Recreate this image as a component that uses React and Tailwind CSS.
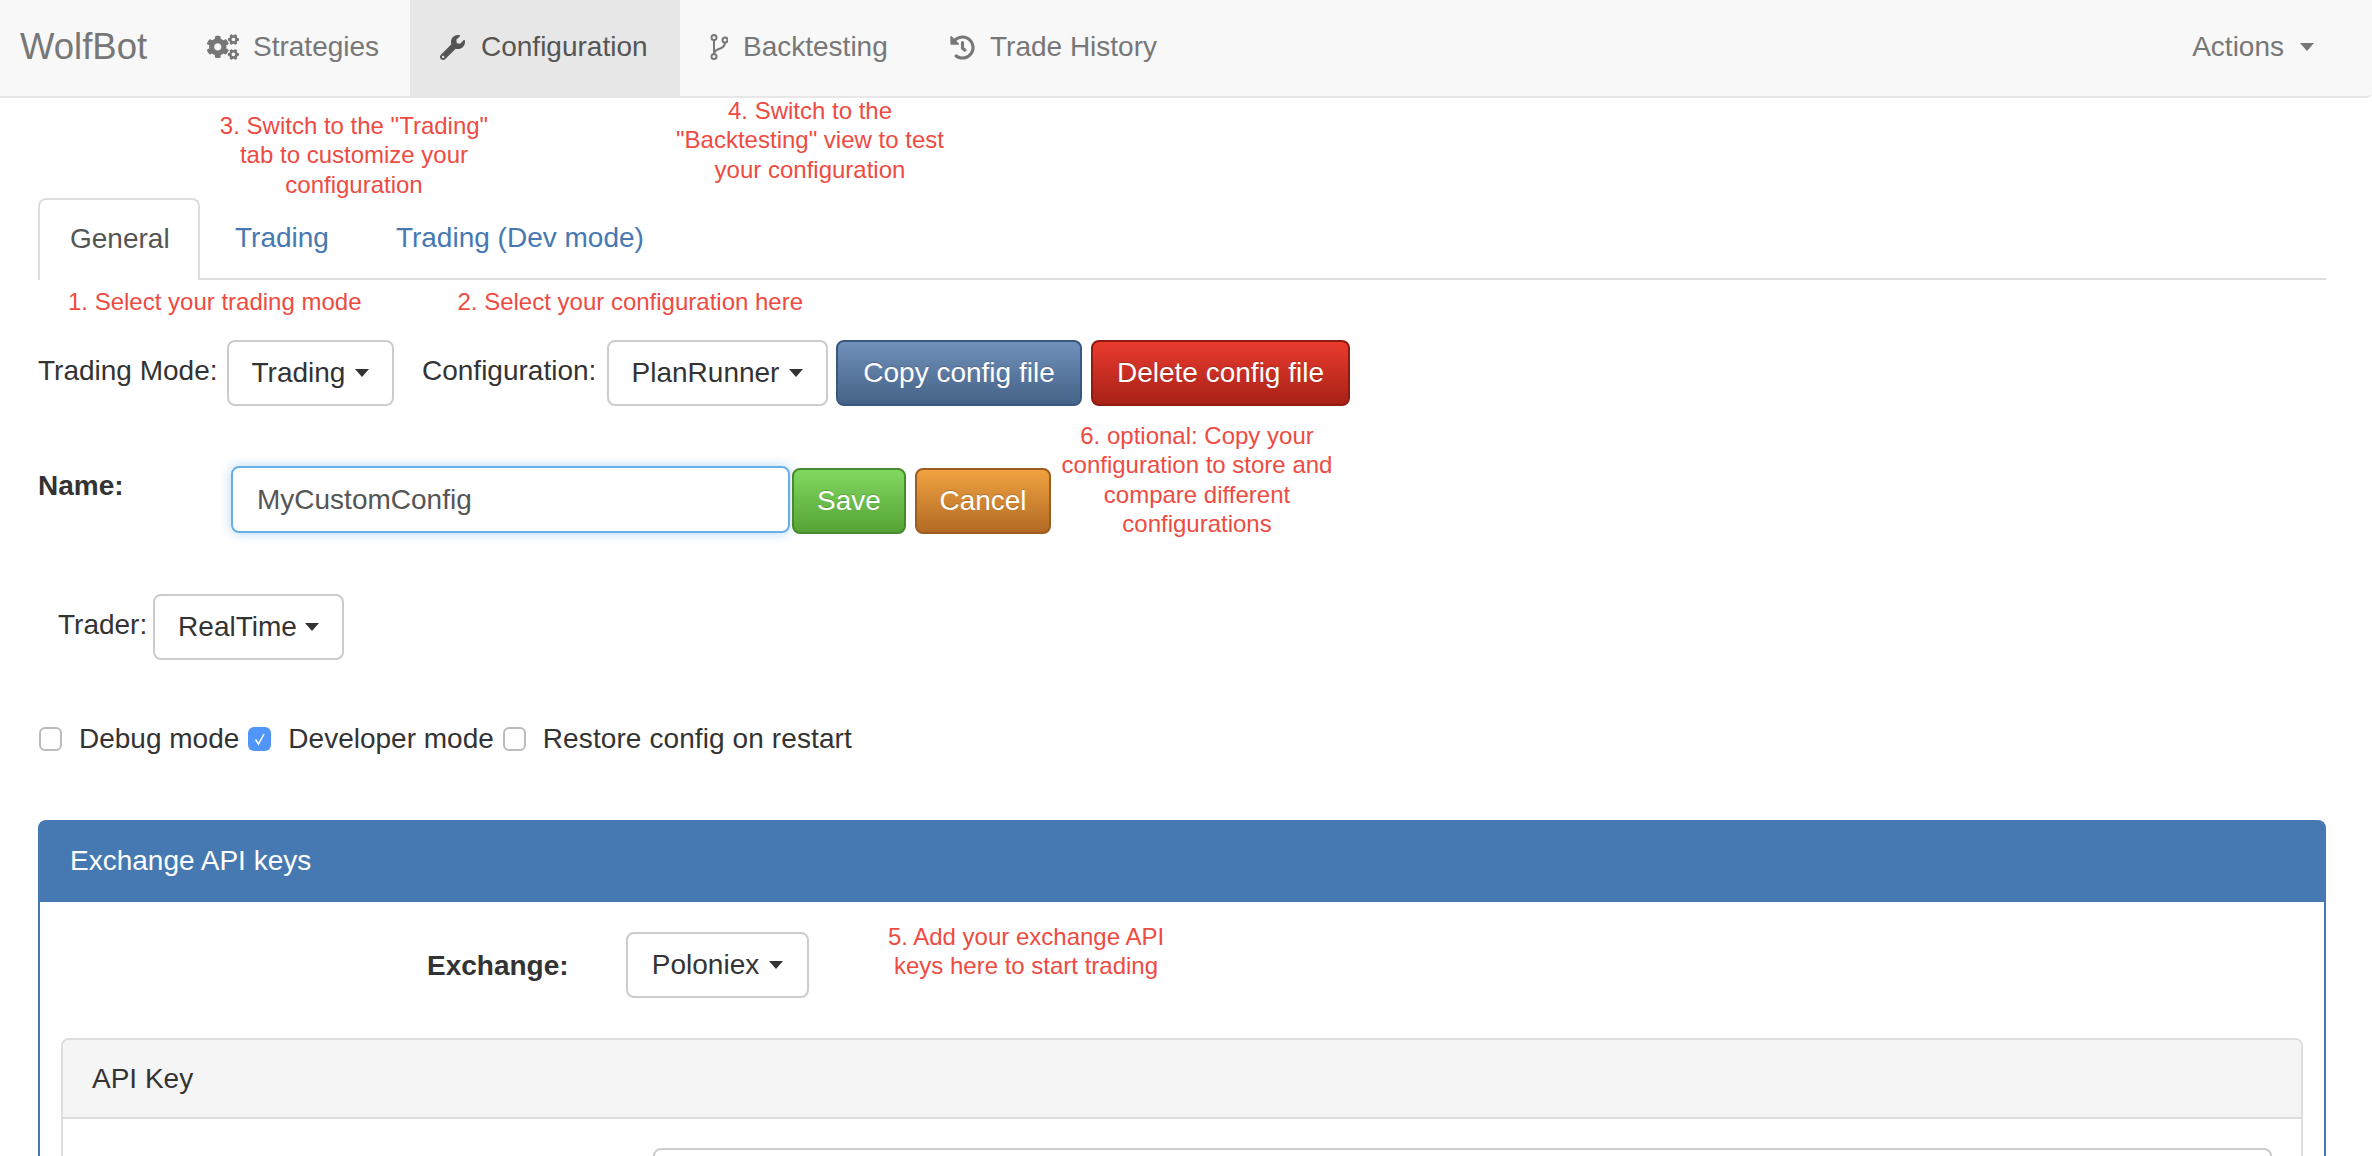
import { FaCogs, FaWrench, FaHistory } from 'react-icons/fa'

function BranchIcon() {
  return (
    <svg width="18" height="26" viewBox="0 0 18 26" fill="none" stroke="#777" strokeWidth="2">
      <circle cx="4" cy="3.5" r="2.5" />
      <circle cx="4" cy="22.5" r="2.5" />
      <circle cx="15" cy="6" r="2.5" />
      <path d="M4 6v14M15 8.5c0 4-3 5.500-6 6.500-3 1-5 2-5 5" />
    </svg>
  )
}

function Caret({ color = 'border-t-[#333]' }) {
  return <span className={`inline-block w-0 h-0 border-x-[7px] border-x-transparent border-t-[8px] ${color}`} />
}

function NavItem({ icon, label, active, iconGap, className = '' }) {
  return (
    <div className={`flex items-center h-full pb-[2px] ${active ? 'bg-[#e7e7e7] text-[#555]' : 'text-[#777]'} ${className}`}>
      <span className={`flex items-center ${iconGap}`}>{icon}</span>
      <span>{label}</span>
    </div>
  )
}

function Note({ children, className = '' }) {
  return <div className={`text-[24px] leading-[29.3px] text-[#ee4b42] text-center shrink-0 ${className}`}>{children}</div>
}

function Dropdown({ label, width, gap = 'gap-[10px]', className = '' }) {
  return (
    <div className={`flex items-center justify-center ${gap} h-[66px] ${width} border-2 border-[#ccc] rounded-lg bg-white text-[#333] shrink-0 ${className}`}>
      <span>{label}</span>
      <Caret />
    </div>
  )
}

function GradButton({ label, width, className = '' }) {
  return (
    <div className={`flex items-center justify-center h-[66px] ${width} border-2 rounded-lg text-white shrink-0 [text-shadow:0_-1px_0_rgba(0,0,0,0.2)] ${className}`}>
      {label}
    </div>
  )
}

function Check({ checked, className = '' }) {
  if (checked) {
    return (
      <span className={`flex items-center justify-center w-[23px] h-[24px] rounded-md bg-[#4f96f8] shrink-0 ${className}`}>
        <svg width="16" height="16" viewBox="0 0 16 16" fill="none" stroke="#fff" strokeWidth="1.5">
          <path d="M3.500 8.500 6.500 13 12 3" />
        </svg>
      </span>
    )
  }
  return <span className={`w-[23px] h-[24px] rounded-md border-2 border-[#bbb] bg-white shrink-0 ${className}`} />
}

export default function App() {
  return (
    <div className="h-[1156px] overflow-hidden bg-white text-[28px] leading-[40px] text-[#333] font-['Liberation_Sans',Arial,sans-serif]">

      {/* Navbar */}
      <div className="flex items-center h-[98px] bg-[#f8f8f8] border-b-2 border-[#e7e7e7] rounded-br-md">
        <div className="ml-[20px] w-[187px] pb-[2px] text-[36.500px] text-[#777]">WolfBot</div>
        <NavItem icon={<FaCogs size={32} color="#777" />} label="Strategies" iconGap="w-[46px]" className="w-[203px]" />
        <NavItem active icon={<FaWrench size={25} color="#555" />} label="Configuration" iconGap="w-[41px]" className="w-[270px] pl-[30px]" />
        <NavItem icon={<BranchIcon />} label="Backtesting" iconGap="w-[33px]" className="w-[270px] pl-[30px]" />
        <NavItem icon={<FaHistory size={25} color="#777" />} label="Trade History" iconGap="w-[40px]" />
        <div className="ml-auto mr-[58px] flex items-center gap-[16px] pb-[2px] text-[#777]">
          <span>Actions</span>
          <Caret color="border-t-[#777]" />
        </div>
      </div>

      {/* Notes over the tabs */}
      <div className="flex h-[100px]">
        <Note className="w-[300px] ml-[204px] mt-[13px]">3. Switch to the "Trading"<br />tab to customize your<br />configuration</Note>
        <Note className="w-[300px] ml-[156px] -mt-[2px]">4. Switch to the<br />"Backtesting" view to test<br />your configuration</Note>
      </div>

      <div className="pl-[38px] pr-[46px]">

        {/* Tabs */}
        <div className="flex h-[82px] border-b-2 border-[#ddd]">
          <div className="flex items-center h-[82px] pb-[2px] px-[30px] w-[162px] border-2 border-b-0 border-[#ddd] rounded-t-lg bg-white text-[#555]">General</div>
          <div className="flex items-center h-[80px] ml-[3px] px-[32px] text-[#4679b2]">Trading</div>
          <div className="flex items-center h-[80px] ml-[3px] px-[32px] text-[#4679b2]">Trading (Dev mode)</div>
        </div>

        {/* Step notes */}
        <div className="flex h-[60px] pt-[7px]">
          <Note className="ml-[30px]">1. Select your trading mode</Note>
          <Note className="ml-[96px]">2. Select your configuration here</Note>
        </div>

        {/* Mode and configuration */}
        <div className="flex items-center h-[66px]">
          <span className="w-[189px] mb-1">Trading Mode:</span>
          <Dropdown label="Trading" width="w-[167px]" />
          <span className="ml-[28px] w-[185px] mb-1">Configuration:</span>
          <Dropdown label="PlanRunner" width="w-[221px]" />
          <GradButton label="Copy config file" width="w-[246px] ml-[8px]" className="border-[#38597f] bg-gradient-to-b from-[#7190ba] to-[#456388]" />
          <GradButton label="Delete config file" width="w-[259px] ml-[9px]" className="border-[#8f1c12] bg-gradient-to-b from-[#ea3b2f] to-[#a82116]" />
        </div>

        {/* Name */}
        <div className="flex items-start h-[67px] mt-[60px]">
          <span className="w-[193px] font-bold">Name:</span>
          <div className="flex items-center w-[559px] h-[67px] pl-[24px] border-2 border-[#66afe9] rounded-lg text-[#555] shadow-[0_0_12px_rgba(102,175,233,0.5)] shrink-0">MyCustomConfig</div>
          <GradButton label="Save" width="w-[114px] ml-[2px] mt-[2px]" className="border-[#4a8a2f] bg-gradient-to-b from-[#81d85f] to-[#56a335]" />
          <GradButton label="Cancel" width="w-[136px] ml-[9px] mt-[2px]" className="border-[#9c5d20] bg-gradient-to-b from-[#f0a240] to-[#b36b25]" />
          <Note className="w-[292px] -mt-[45px]">6. optional: Copy your<br />configuration to store and<br />compare different<br />configurations</Note>
        </div>

        {/* Trader */}
        <div className="flex items-center h-[66px] mt-[61px] pl-[20px]">
          <span className="w-[95px] mb-1">Trader:</span>
          <Dropdown label="RealTime" width="w-[191px]" gap="gap-[8px]" />
        </div>

        {/* Checkboxes */}
        <div className="flex items-center h-[30px] mt-[64px]">
          <Check className="ml-[1px]" />
          <span className="ml-[17px]">Debug mode</span>
          <Check checked className="ml-[9px]" />
          <span className="ml-[17px]">Developer mode</span>
          <Check className="ml-[9px]" />
          <span className="ml-[17px] tracking-[0.1px]">Restore config on restart</span>
        </div>

        {/* Exchange panel */}
        <div className="mt-[66px] h-[600px] border-2 border-[#4679b2] rounded-t-lg">
          <div className="flex items-center h-[80px] pl-[30px] pb-[2px] bg-[#4679b2] text-white">Exchange API keys</div>
          <div className="flex items-center h-[66px] mt-[30px]">
            <span className="ml-[387px] w-[199px] pt-[2px] font-bold">Exchange:</span>
            <Dropdown label="Poloniex" width="w-[183px]" />
            <Note className="w-[300px] ml-[67px] -mt-[28px]">5. Add your exchange API<br />keys here to start trading</Note>
          </div>

          {/* API key panel */}
          <div className="mt-[40px] mx-[21px] border-2 border-[#ddd] rounded-t-lg h-[400px]">
            <div className="flex items-center h-[79px] pl-[29px] bg-[#f5f5f5] border-b-2 border-[#ddd] rounded-t-md">API Key</div>
            <div className="mt-[29px] ml-[590px] mr-[29px] h-[67px] border-2 border-[#ccc] rounded-lg" />
          </div>
        </div>
      </div>
    </div>
  )
}
